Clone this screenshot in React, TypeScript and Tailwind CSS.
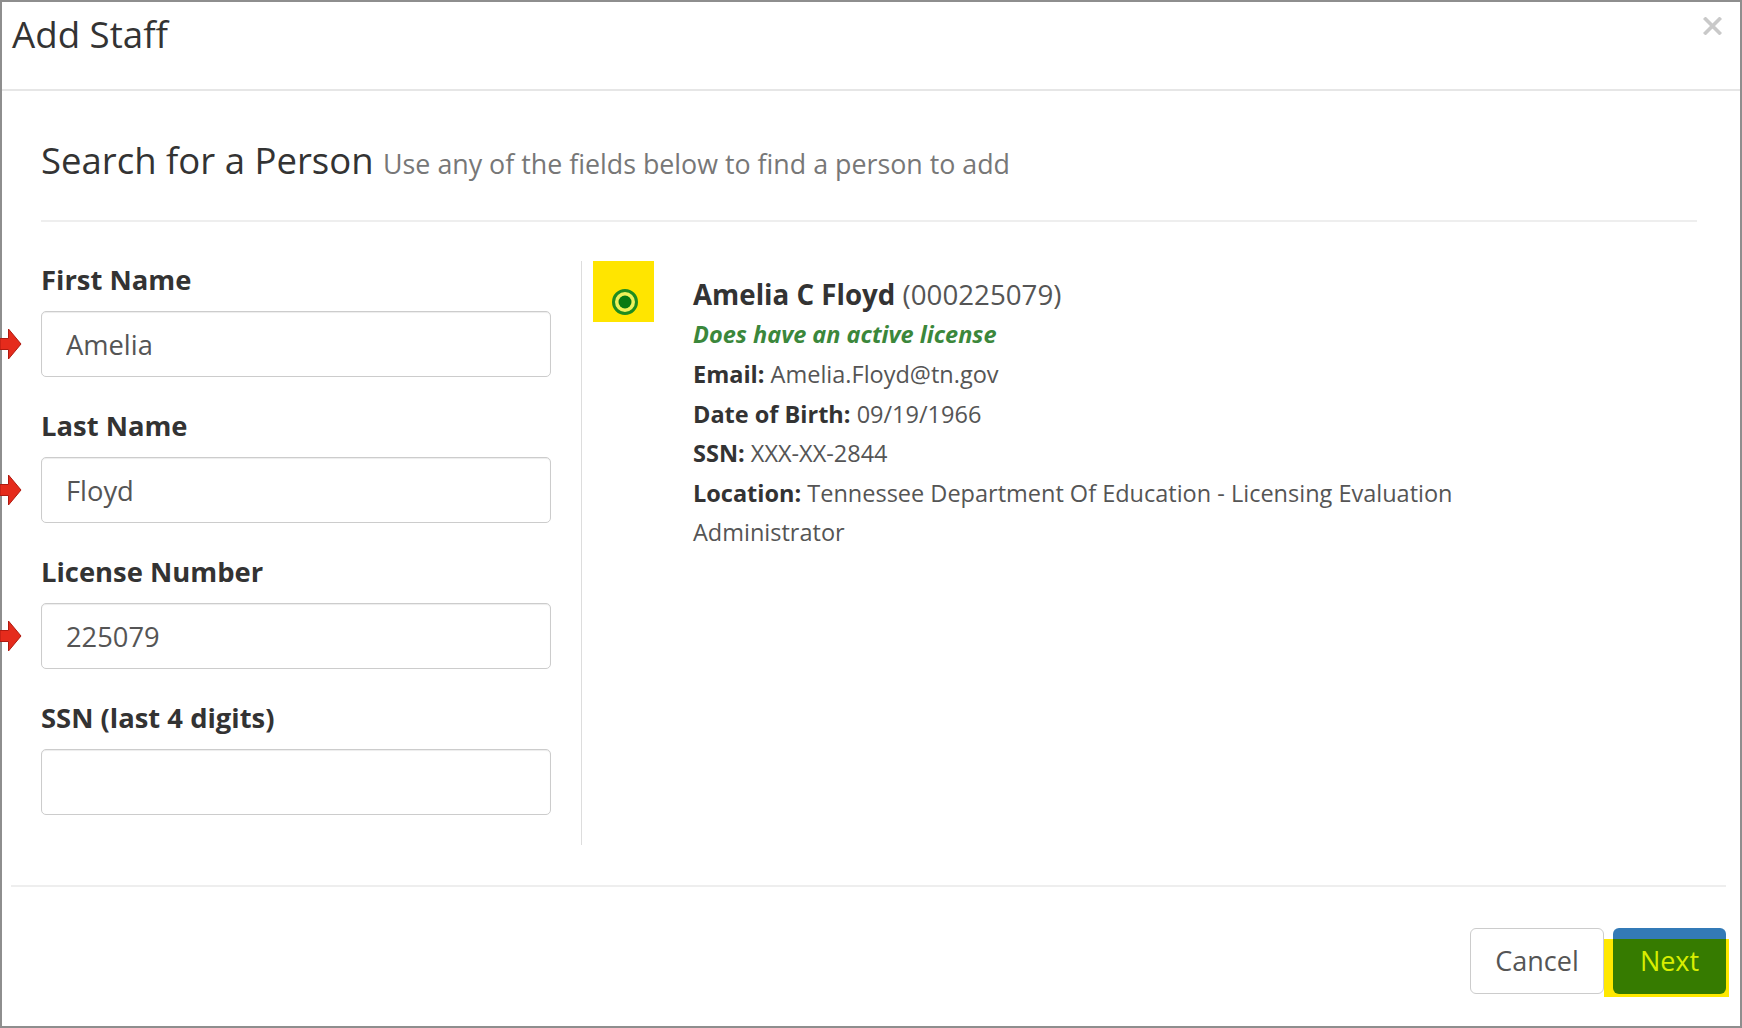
import type { ReactNode } from 'react';

type Field = { label: string; value: string; marked: boolean };

const FIELDS: Field[] = [
  { label: 'First Name', value: 'Amelia', marked: true },
  { label: 'Last Name', value: 'Floyd', marked: true },
  { label: 'License Number', value: '225079', marked: true },
  { label: 'SSN (last 4 digits)', value: '', marked: false },
];

// red callout arrow pointing at a filled-in field
function PointerArrow() {
  return (
    <svg
      width="22"
      height="32"
      viewBox="0 0 22 32"
      aria-hidden="true"
      className="absolute top-1/2 left-[-41px] -translate-y-1/2"
    >
      <path
        d="M0 10.5H8.5V1L21 16L8.5 31V21.5H0Z"
        fill="#e52b1c"
        stroke="#b01a10"
        strokeWidth="1"
      />
    </svg>
  );
}

function SearchField({ field }: { field: Field }) {
  return (
    <div>
      <label className="block text-[27.4px] leading-[30px] font-bold text-[#333333]">
        {field.label}
      </label>
      <div className="relative mt-4">
        {field.marked && <PointerArrow />}
        <input
          readOnly
          value={field.value}
          className="block h-[66px] w-full rounded-[5px] border-[1.5px] border-[#cccccc] bg-white px-6 text-[27.3px] text-[#555555] shadow-[inset_0_1px_1px_rgba(0,0,0,0.075)] outline-none"
        />
      </div>
    </div>
  );
}

function Detail({ term, children }: { term: string; children: ReactNode }) {
  return (
    <div className="text-[23.5px] leading-[39.5px] text-[#555555]">
      <b className="font-bold text-[#333333]">{term}:</b> {children}
    </div>
  );
}

export default function App() {
  return (
    <div className="box-border flex h-[1028px] w-[1742px] flex-col border-2 border-[#8e8e8e] bg-white font-['Open_Sans',sans-serif] text-[#333333]">
      <header className="relative h-[89px] shrink-0 border-b-2 border-[#e6e6e6] pt-[12px] pl-[10px]">
        <h1 className="text-[36.7px] leading-[40px] text-[#333333]">Add Staff</h1>
        <button
          type="button"
          aria-label="Close"
          className="absolute top-[15px] right-[18px]"
        >
          <svg width="19" height="18" viewBox="0 0 19 18" aria-hidden="true">
            <path
              d="M2.5 2L16.5 16M16.5 2L2.5 16"
              stroke="#c9c9c9"
              strokeWidth="3.6"
              strokeLinecap="square"
            />
          </svg>
        </button>
      </header>

      <div className="pr-[43px] pl-[39px]">
        <h2 className="mt-[47px] text-[36.5px] leading-[44px] text-[#333333]">
          Search for a Person{' '}
          <small className="text-[26.8px] text-[#777777]">
            Use any of the fields below to find a person to add
          </small>
        </h2>
        <div className="mt-[34px] h-[2px] bg-[#eeeeee]" />

        <div className="mt-[39px] flex">
          <div className="mr-[30px] flex w-[510px] shrink-0 flex-col gap-[34px] pt-1 pb-[30px]">
            {FIELDS.map((field) => (
              <SearchField key={field.label} field={field} />
            ))}
          </div>

          <div className="flex flex-1 items-start border-l border-[#dddddd] pl-[11px]">
            <div className="relative h-[61px] w-[61px] shrink-0 bg-[#ffe500]">
              <svg
                width="28"
                height="28"
                viewBox="0 0 28 28"
                aria-hidden="true"
                className="absolute top-[27px] left-[18px]"
              >
                <circle cx="14" cy="14" r="11.5" fill="#eef25a" stroke="#1f8c1f" strokeWidth="3" />
                <circle cx="14" cy="14" r="6.5" fill="#087a12" />
              </svg>
            </div>

            <div className="ml-[39px] w-[790px] pt-[13px]">
              <div className="text-[27.7px] leading-[40px]">
                <b className="font-bold text-[#333333]">Amelia C Floyd</b>{' '}
                <span className="text-[#555555]">(000225079)</span>
              </div>
              <div className="text-[23.5px] leading-[41px] font-bold text-[#3b873b] italic">
                Does have an active license
              </div>
              <Detail term="Email">Amelia.Floyd@tn.gov</Detail>
              <Detail term="Date of Birth">09/19/1966</Detail>
              <Detail term="SSN">XXX-XX-2844</Detail>
              <Detail term="Location">
                Tennessee Department Of Education - Licensing Evaluation Administrator
              </Detail>
            </div>
          </div>
        </div>
      </div>

      <div className="mt-[40px] mr-[14px] ml-[9px] h-[2px] bg-[#eeeeee]" />
      <div className="mt-[41px] mr-[14px] flex justify-end gap-[9px]">
        <button
          type="button"
          className="h-[66px] w-[134px] rounded-[6px] border border-[#cccccc] bg-white text-[27px] text-[#555555]"
        >
          Cancel
        </button>
        <div className="relative">
          <span className="absolute top-[11px] right-[-3px] bottom-[-3px] left-[-9px] bg-[#ffe800]" />
          <button
            type="button"
            className="relative h-[66px] w-[113px] rounded-[6px] bg-[linear-gradient(to_bottom,#337ab7_11px,#367b00_11px)] text-[27px] text-[#d9ee00]"
          >
            Next
          </button>
        </div>
      </div>
    </div>
  );
}
